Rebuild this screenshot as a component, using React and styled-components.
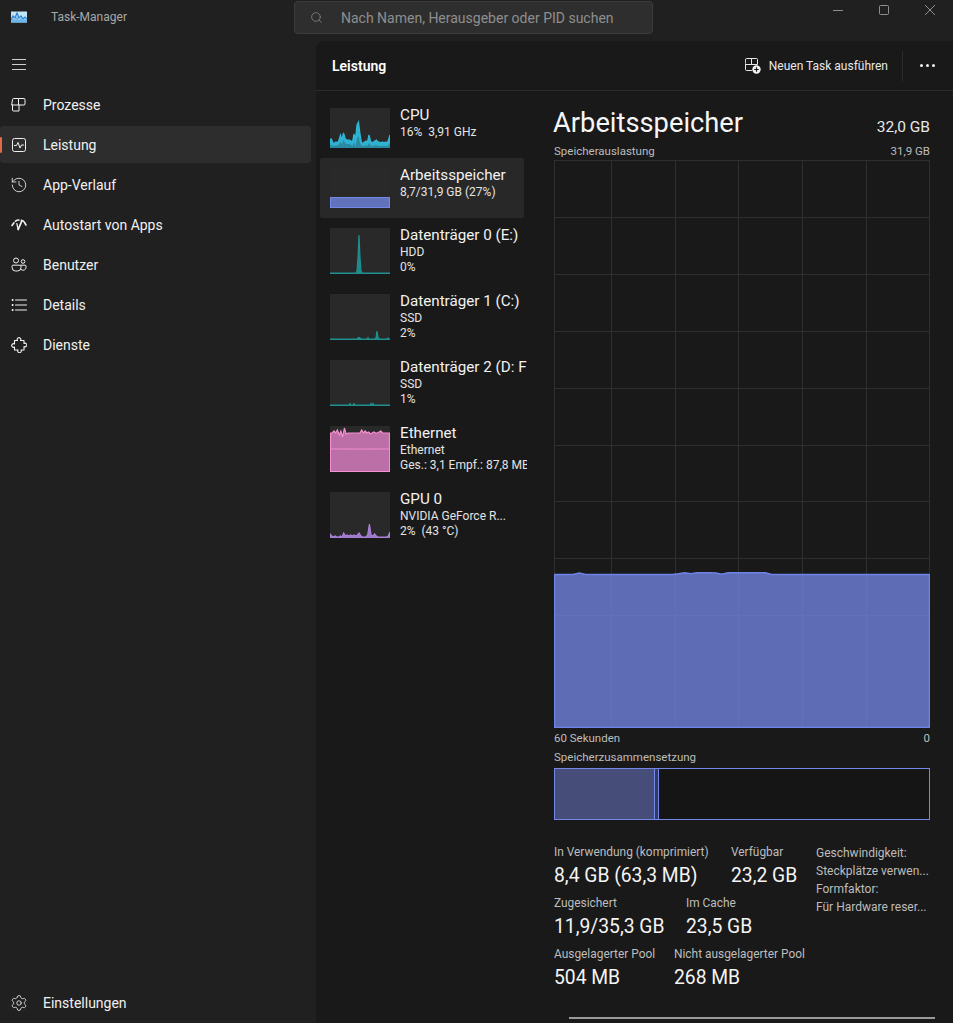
import React from 'react';
import styled, { createGlobalStyle } from 'styled-components';
import { Search, History, Settings } from 'lucide-react';

const Global = createGlobalStyle`
html, body { margin: 0; padding: 0; background: #202020; }
* { box-sizing: border-box; }
body { font-family: "Roboto", "Noto Sans", sans-serif; color: #fff; }
`

const Win = styled.div`
width: 953px;
height: 1023px;
display: flex;
flex-direction: column;
overflow: hidden;
background: #202020;
`

const TitleBar = styled.div`
height: 41px;
flex: none;
display: grid;
grid-template-columns: 294px 359px 1fr;
`

const AppName = styled.div`
display: flex;
align-items: center;
height: 34px;
padding-left: 11px;
gap: 24px;
font-size: 12px;
color: #a8a8a8;
`

const SearchBox = styled.div`
height: 33px;
margin-top: 1px;
display: flex;
align-items: center;
gap: 18px;
padding-left: 15px;
background: #2e2e2e;
border: 1px solid #3c3c3c;
border-radius: 4px;
font-size: 14px;
color: #8e8e8e;
`

const WinControls = styled.div`
display: flex;
justify-content: flex-end;
padding: 4px 17px 0 0;
gap: 34px;
color: #8f8f8f;
`

const Body = styled.div`
flex: 1;
display: flex;
min-height: 0;
`

const Sidebar = styled.nav`
width: 316px;
flex: none;
display: flex;
flex-direction: column;
`

const Burger = styled.div`
height: 45px;
padding: 15px 0 0 11px;
color: #cfcfcf;
`

const NavItem = styled.div`
position: relative;
height: 37px;
width: 311px;
margin-bottom: ${p => (p.$bottom ? '2px' : '3px')};
display: flex;
align-items: center;
gap: 16px;
padding-left: 11px;
font-size: 14px;
color: #f0f0f0;
border-radius: 4px;
background: ${p => (p.$active ? '#2d2d2d' : 'transparent')};
margin-top: ${p => (p.$bottom ? 'auto' : '0')};
`

const Accent = styled.span`
position: absolute;
left: 0;
top: 11px;
width: 2px;
height: 16px;
border-radius: 1px;
background: #e2694a;
`

const HistoryIcon = styled(History)`
flex: none;
margin: 0 -1px;
`

const GearIcon = styled(Settings)`
flex: none;
margin: 0 -1px;
`

const Main = styled.main`
flex: 1;
position: relative;
display: flex;
flex-direction: column;
background: #191919;
border-top-left-radius: 8px;
min-width: 0;
`

const Header = styled.header`
height: 50px;
flex: none;
display: flex;
align-items: center;
padding: 0 18px 0 16px;
border-bottom: 1px solid #2c2c2c;
`

const HeaderTitle = styled.h1`
margin: 0;
font-size: 14px;
font-weight: 600;
flex: 1;
`

const RunTask = styled.div`
display: flex;
align-items: center;
gap: 8px;
font-size: 12px;
color: #e8e8e8;
padding-right: 14px;
`

const Divider = styled.span`
width: 1px;
height: 30px;
background: #2c2c2c;
margin-right: 17px;
`

const Dots = styled.div`
display: flex;
gap: 3px;
span { width: 3px; height: 3px; border-radius: 50%; background: #f0f0f0; }
`

const Content = styled.div`
flex: 1;
display: flex;
min-height: 0;
padding-left: 4px;
`

const DeviceList = styled.div`
width: 207px;
flex: none;
padding-top: 7px;
overflow: hidden;
`

const Device = styled.div`
width: 204px;
height: ${p => p.$h}px;
display: flex;
align-items: flex-start;
gap: 10px;
padding: 10px 0 0 10px;
border-radius: 2px;
background: ${p => (p.$active ? '#282828' : 'transparent')};
`

const DeviceInfo = styled.div`
display: flex;
flex-direction: column;
white-space: nowrap;
color: #f2f2f2;
margin-top: -3px;
`

const DeviceName = styled.div`
font-size: 15.2px;
line-height: 20px;
`

const DeviceSub = styled.div`
font-size: 12px;
line-height: 15px;
color: #e4e4e4;
`

const Thumb = styled.svg`
display: block;
flex: none;
width: 60px;
background: #292929;
`

const Detail = styled.section`
width: 376px;
margin-left: 27px;
flex: none;
display: flex;
flex-direction: column;
`

const SpaceBetween = styled.div`
display: flex;
justify-content: space-between;
align-items: ${p => p.$align || 'center'};
margin-top: ${p => p.$mt || 0}px;
`

const Title = styled.div`
font-size: 27.3px;
line-height: 34px;
margin: 15px 0 0 -1px;
color: #f6f6f6;
`

const Total = styled.div`
font-size: 15.5px;
color: #e8e8e8;
padding-bottom: 4px;
`

const Caption = styled.div`
font-size: 11.5px;
line-height: 14px;
margin-top: ${p => p.$mt || 0}px;
color: #bdbdbd;
`

const Chart = styled.svg`
display: block;
width: 376px;
height: 568px;
margin: 2px 0 3px;
`

const Composition = styled.div`
height: 52px;
margin-top: 4px;
display: flex;
background: #151515;
border: 1px solid #7488e8;
`

const CompUsed = styled.div`
width: 100px;
background: #454d78;
border-right: 1px solid #7488e8;
`

const CompModified = styled.div`
width: 4px;
background: #333a60;
border-right: 1px solid #7488e8;
`

const Stats = styled.div`
margin-top: 24px;
display: flex;
`

const StatColumn = styled.div`
width: 262px;
flex: none;
`

const StatRow = styled.div`
display: flex;
height: 51px;
`

const Stat = styled.div`
width: ${p => p.$w}px;
flex: none;
white-space: nowrap;
`

const StatLabel = styled.div`
font-size: 11.9px;
line-height: 16px;
color: #bdbdbd;
`

const StatValue = styled.div`
font-size: 19.3px;
line-height: 28px;
margin-top: 2px;
color: #f4f4f4;
`

const Facts = styled.div`
display: flex;
flex-direction: column;
`

const Fact = styled.div`
font-size: 12px;
line-height: 18px;
color: #bdbdbd;
white-space: nowrap;
`

const ScrollThumb = styled.div`
position: absolute;
left: 253px;
right: 18px;
bottom: 4px;
height: 2px;
background: #9a9a9a;
`

const LogoIcon = () => (
  <svg width="16" height="12" viewBox="0 0 16 12">
    <rect width="16" height="11" y="0.5" fill="#bfe3f7" />
    <path d="M0 9 L2 5 L4 7 L6 2 L8 7 L10 5 L12 8 L14 6 L16 8" fill="none" stroke="#2b7fd0" strokeWidth="1.2" />
    <path d="M0 10 L2 7 L4 9 L6 5 L8 9 L10 7 L12 9 L14 8 L16 9 V11.5 H0 Z" fill="#6bb5ea" />
  </svg>
);

const Line = ({ d, w = 1 }) => <path d={d} fill="none" stroke="currentColor" strokeWidth={w} strokeLinecap="round" strokeLinejoin="round" />;

const NavSvg = ({ children }) => (
  <svg width="16" height="16" viewBox="0 0 16 16" style={{ flex: 'none' }}>{children}</svg>
);

const ProcessIcon = () => (
  <NavSvg>
    <Line d="M1.5 2.5a1 1 0 0 1 1-1h5v6.5h-6.5zM8 1.5h5a1 1 0 0 1 1 1v4.5a1 1 0 0 1-1 1h-5M1.5 8v5a1 1 0 0 0 1 1h5.5v-6" />
  </NavSvg>
);

const PerfIcon = () => (
  <NavSvg>
    <rect x="1.5" y="1.5" width="13" height="13" rx="2" fill="none" stroke="currentColor" />
    <Line d="M3.5 8.5h2l1.5-3 2 5.5 1.5-3h2" />
  </NavSvg>
);

const GaugeIcon = () => (
  <NavSvg>
    <Line w={1.600} d="M1 8.500l2-2.700M4.500 4.200c1-.8 2.200-1.200 3.500-1.200M10.500 3.300c1.300.4 2.500 1.200 3.200 2.300M13.800 6l1.200 2" />
    <Line w={1.800} d="M10.800 4L7.200 12.500" />
    <Line w={1.200} d="M7.200 12.500L5.800 6.500" />
  </NavSvg>
);

const UsersIcon = () => (
  <NavSvg>
    <circle cx="5" cy="3.500" r="2.500" fill="none" stroke="currentColor" />
    <circle cx="12" cy="4.500" r="1.800" fill="none" stroke="currentColor" />
    <Line d="M1 9a.8.8 0 0 1 .8-.8h7.400a.8.8 0 0 1 .8.8v1.500a3.500 3.500 0 0 1-3.500 3.500h-2a3.500 3.500 0 0 1-3.500-3.500zM10 8.200h4.200a.8.800 0 0 1 .8.8v1.200a2.900 2.900 0 0 1-4.900 2.300" />
  </NavSvg>
);

const ListIcon = () => (
  <NavSvg>
    <Line d="M4.500 3h11M4.500 8h11M4.500 13h11" />
    <rect x="0.800" y="2" width="1.600" height="2" fill="currentColor" />
    <rect x="0.800" y="7" width="1.600" height="2" fill="currentColor" />
    <rect x="0.800" y="12" width="1.600" height="2" fill="currentColor" />
  </NavSvg>
);

const PuzzleIcon = () => (
  <NavSvg>
    <Line w={1.100} d="M6.500 3.500a1.800 1.800 0 1 1 3 0h3.500v3a1.800 1.800 0 1 1 0 3v3.500h-3a1.800 1.800 0 1 1-3 0h-3.500v-3a1.800 1.800 0 1 1 0-3v-3.500z" />
  </NavSvg>
);

const RunIcon = () => (
  <svg width="16" height="16" viewBox="0 0 16 16" style={{ flex: 'none' }}>
    <Line d="M.5 1.500a1 1 0 0 1 1-1h5v6h-6zM6.500.5h5a1 1 0 0 1 1 1v5h-6M.5 6.500v5a1 1 0 0 0 1 1h5" />
    <circle cx="11.500" cy="11.500" r="4.200" fill="#f4f4f4" />
    <path d="M11.500 9.200v4.600M9.200 11.500h4.600" stroke="#191919" strokeWidth="1.200" />
  </svg>
);

// spark values run left to right, height in px above the thumb's bottom
const area = (vals, h, x0, x1) => {
  const step = (x1 - x0) / (vals.length - 1);
  return vals.map((v, i) => `${(x0 + i * step).toFixed(1)},${h - v}`).join(' ');
};

const Spark = ({ h, vals, line, fill, inner, innerFill, innerLine, boxed }) => {
  const x0 = boxed ? 0.500 : 0;
  const x1 = boxed ? 59.500 : 60;
  const y1 = boxed ? h - 0.500 : h;
  return (
    <Thumb viewBox={`0 0 60 ${h}`} style={{ height: h }}>
      <polygon points={`${x0},${y1} ${area(vals, h, x0, x1)} ${x1},${y1}`} fill={fill} stroke={line} strokeWidth="1.200" />
      {inner && <polygon points={`${x0},${y1} ${area(inner, h, x0, x1)} ${x1},${y1}`} fill={innerFill} stroke={innerLine || 'none'} strokeWidth="1" />}
    </Thumb>
  );
};

const flat = (n, base, spikes = {}) => Array.from({ length: n }, (_, i) => (i in spikes ? spikes[i] : base));

const devices = [
  { name: 'CPU', sub: ['16%\u00a0 3,91 GHz'], h: 40, boxH: 60, line: '#2fb8d8', fill: '#2fb0cf', innerFill: '#2b8aa3',
    vals: [9, 9, 5, 5, 6, 5, 8, 13, 8, 15, 10, 8, 8, 8, 7, 6, 14, 9, 23, 26, 14, 5, 5, 6, 7, 6, 13, 7, 5, 6, 7, 8, 6, 6, 5, 6, 5, 6, 5, 8, 13],
    inner: [3, 3, 2, 2, 3, 2, 4, 6, 4, 8, 5, 4, 4, 4, 3, 2, 6, 1, 10, 12, 5, 2, 2, 2, 3, 2, 5, 3, 2, 2, 3, 3, 2, 2, 2, 2, 2, 2, 2, 3, 5] },
  { name: 'Arbeitsspeicher', sub: ['8,7/31,9 GB (27%)'], h: 40, boxH: 60, active: true, boxed: true, line: '#7488e8', fill: '#6272ba', vals: flat(20, 10.500) },
  { name: 'Datenträger 0 (E:)', sub: ['HDD', '0%'], h: 46, boxH: 66, line: '#1f8f8f', fill: '#1f8a8a',
    vals: flat(61, 1, { 27: 3, 28: 16, 29: 39, 30: 16, 31: 3 }) },
  { name: 'Datenträger 1 (C:)', sub: ['SSD', '2%'], h: 46, boxH: 66, line: '#1f8f8f', fill: '#1f8a8a',
    vals: flat(61, 1, { 28: 2, 29: 2.500, 30: 2, 38: 2.500, 46: 2, 47: 9, 48: 3, 58: 2 }) },
  { name: 'Datenträger 2 (D: Filme)', sub: ['SSD', '1%'], h: 46, boxH: 66, line: '#1f8f8f', fill: '#1f8a8a',
    vals: flat(61, 1, { 20: 2.500, 24: 2.500, 41: 2.500, 43: 2.500 }) },
  { name: 'Ethernet', sub: ['Ethernet', 'Ges.: 3,1 Empf.: 87,8 MBit/s'], h: 46, boxH: 66, boxed: true, line: '#f590d0', fill: '#bb6fa6', innerFill: '#bb6fa6', innerLine: '#f590d0',
    vals: [39, 39, 41, 39, 42, 37, 41, 35, 44, 38, 39, 39, 39, 39, 39, 39, 39, 39, 42, 39, 41, 39, 40, 38, 39, 40, 39, 39, 40, 41, 39, 39, 39, 39, 39],
    inner: flat(20, 23) },
  { name: 'GPU 0', sub: ['NVIDIA GeForce R...', '2%\u00a0 (43 °C)'], h: 46, boxH: 66, line: '#a982d8', fill: '#9a78c8',
    vals: [4, 2, 1, 2, 1, 1, 2, 1, 5, 2, 3, 2, 3, 2, 3, 2, 3, 5, 2, 1, 1, 1, 3, 14, 3, 2, 4, 2, 1, 1, 1, 1, 1, 1, 2, 6] },
];

const navItems = [
  { label: 'Prozesse', icon: <ProcessIcon /> },
  { label: 'Leistung', icon: <PerfIcon />, active: true },
  { label: 'App-Verlauf', icon: <HistoryIcon size={18} strokeWidth={1.100} /> },
  { label: 'Autostart von Apps', icon: <GaugeIcon /> },
  { label: 'Benutzer', icon: <UsersIcon /> },
  { label: 'Details', icon: <ListIcon /> },
  { label: 'Dienste', icon: <PuzzleIcon /> },
];

const statRows = [
  [{ w: 177, label: 'In Verwendung (komprimiert)', value: '8,4 GB (63,3 MB)' }, { w: 85, label: 'Verfügbar', value: '23,2 GB' }],
  [{ w: 132, label: 'Zugesichert', value: '11,9/35,3 GB' }, { w: 130, label: 'Im Cache', value: '23,5 GB' }],
  [{ w: 120, label: 'Ausgelagerter Pool', value: '504 MB' }, { w: 142, label: 'Nicht ausgelagerter Pool', value: '268 MB' }],
];

const facts = ['Geschwindigkeit:', 'Steckplätze verwen...', 'Formfaktor:', 'Für Hardware reser...'];

// small rises above the flat memory line, one value per 6.2px of the chart
const memTop = flat(61, 0, { 4: 1, 20: 0.500, 21: 1.200, 22: 0.500, 23: 1.200, 24: 1.200, 25: 1.200, 26: 1, 27: 0.200, 28: 1.200, 29: 1.200, 30: 1.200, 31: 1.200, 32: 1.200, 33: 1.200, 34: 1.200 });

const MemChart = () => {
  const vx = [57, 121, 184, 248, 312];
  const hy = [0, 1, 2, 3, 4, 5, 6, 7].map(i => 57.300 + i * 56.800);
  const top = 414.500;
  const pts = memTop.map((v, i) => `${i * 6.2 + 0.500},${top - v * 1.500}`).join(' ');
  return (
    <Chart viewBox="0 0 376 568">
      <rect x="0.500" y="0.500" width="375" height="567" fill="none" stroke="#2f2f2f" />
      {vx.map(x => <line key={x} x1={x + 0.500} x2={x + 0.500} y1="0" y2="568" stroke="#2f2f2f" />)}
      {hy.map(y => <line key={y} x1="0" x2="376" y1={Math.round(y) + 0.500} y2={Math.round(y) + 0.500} stroke="#2f2f2f" />)}
      <polygon points={`0.500,567.500 ${pts} 375.500,${top} 375.500,567.500`} fill="#7488e8" fillOpacity="0.75" stroke="#6f84e6" strokeWidth="1.500" />
    </Chart>
  );
};

export default function App() {
  return (
    <Win>
      <Global />
      <TitleBar>
        <AppName><LogoIcon />Task-Manager</AppName>
        <SearchBox><Search size={13} strokeWidth={1.300} />Nach Namen, Herausgeber oder PID suchen</SearchBox>
        <WinControls>
          <svg width="12" height="12" viewBox="0 0 12 12"><path d="M1 6.500h10" stroke="currentColor" /></svg>
          <svg width="12" height="12" viewBox="0 0 12 12"><rect x="1.500" y="1.500" width="9" height="9" rx="1" fill="none" stroke="currentColor" /></svg>
          <svg width="12" height="12" viewBox="0 0 12 12"><path d="M1 1l10 10M11 1L1 11" stroke="currentColor" /></svg>
        </WinControls>
      </TitleBar>
      <Body>
        <Sidebar>
          <Burger>
            <svg width="16" height="16" viewBox="0 0 16 16"><path d="M1 3.500h14M1 8.500h14M1 13.500h14" stroke="currentColor" /></svg>
          </Burger>
          {navItems.map(item => (
            <NavItem key={item.label} $active={item.active}>
              {item.active && <Accent />}
              {item.icon}
              {item.label}
            </NavItem>
          ))}
          <NavItem $bottom>
            <GearIcon size={18} strokeWidth={1.100} />
            Einstellungen
          </NavItem>
        </Sidebar>
        <Main>
          <Header>
            <HeaderTitle>Leistung</HeaderTitle>
            <RunTask><RunIcon />Neuen Task ausführen</RunTask>
            <Divider />
            <Dots><span /><span /><span /></Dots>
          </Header>
          <Content>
            <DeviceList>
              {devices.map(d => (
                <Device key={d.name} $h={d.boxH} $active={d.active}>
                  <Spark h={d.h} vals={d.vals} line={d.line} fill={d.fill} inner={d.inner} innerFill={d.innerFill} innerLine={d.innerLine} boxed={d.boxed} />
                  <DeviceInfo>
                    <DeviceName>{d.name}</DeviceName>
                    {d.sub.map(s => <DeviceSub key={s}>{s}</DeviceSub>)}
                  </DeviceInfo>
                </Device>
              ))}
            </DeviceList>
            <Detail>
              <SpaceBetween $align="flex-end">
                <Title>Arbeitsspeicher</Title>
                <Total>32,0 GB</Total>
              </SpaceBetween>
              <SpaceBetween $mt={4}>
                <Caption>Speicherauslastung</Caption>
                <Caption>31,9 GB</Caption>
              </SpaceBetween>
              <MemChart />
              <SpaceBetween>
                <Caption>60 Sekunden</Caption>
                <Caption>0</Caption>
              </SpaceBetween>
              <Caption $mt={5}>Speicherzusammensetzung</Caption>
              <Composition>
                <CompUsed />
                <CompModified />
              </Composition>
              <Stats>
                <StatColumn>
                  {statRows.map((row, i) => (
                    <StatRow key={i}>
                      {row.map(s => (
                        <Stat key={s.label} $w={s.w}>
                          <StatLabel>{s.label}</StatLabel>
                          <StatValue>{s.value}</StatValue>
                        </Stat>
                      ))}
                    </StatRow>
                  ))}
                </StatColumn>
                <Facts>
                  {facts.map(f => <Fact key={f}>{f}</Fact>)}
                </Facts>
              </Stats>
            </Detail>
          </Content>
          <ScrollThumb />
        </Main>
      </Body>
    </Win>
  );
}
